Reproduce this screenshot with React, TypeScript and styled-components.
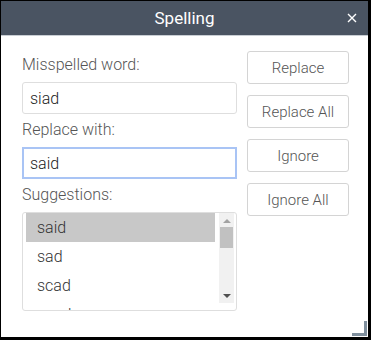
import React, { useState } from "react";
import styled, { createGlobalStyle } from "styled-components";

const GlobalStyle = createGlobalStyle`
  html, body {
    margin: 0;
    padding: 0;
    background: #fff;
  }
  body {
    font-family: Roboto, "Liberation Sans", Arial, sans-serif;
  }
`;

const Dialog = styled.div`
  position: relative;
  box-sizing: border-box;
  width: 371px;
  height: 340px;
  border-style: solid;
  border-color: #000;
  border-width: 1px 3px 3px 1px;
  background: #fff;
  display: flex;
  flex-direction: column;
`;

const TitleBar = styled.div`
  position: relative;
  height: 34px;
  flex-shrink: 0;
  background: #4a5462;
  border-bottom: 1px solid #c9ced4;
  display: flex;
  align-items: center;
  justify-content: center;
`;

const Title = styled.div`
  color: #fff;
  font-size: 17px;
  line-height: 20px;
  margin-top: -1px;
`;

const CloseButton = styled.button`
  position: absolute;
  right: 9px;
  top: 10px;
  width: 14px;
  height: 14px;
  padding: 0;
  border: 0;
  background: none;
  cursor: pointer;
  display: flex;
  align-items: center;
  justify-content: center;
`;

const Body = styled.div`
  display: flex;
  gap: 10px;
  padding: 14px 0 0 21px;
`;

const LeftColumn = styled.div`
  width: 215px;
  display: flex;
  flex-direction: column;
`;

const Label = styled.label<{ $first?: boolean }>`
  display: block;
  color: #555;
  font-size: 16px;
  font-weight: 300;
  line-height: 20px;
  margin: ${(p) => (p.$first ? "5px 0 7px" : "6px 0 7px")};
`;

const TextInput = styled.input<{ $focused?: boolean }>`
  box-sizing: border-box;
  width: 215px;
  height: 32px;
  margin: 0;
  font-family: inherit;
  font-size: 16px;
  font-weight: 300;
  color: #222;
  background: #fff;
  outline: none;
  border: ${(p) => (p.$focused ? "2px solid #a9c4f5" : "1px solid #dedede")};
  border-radius: ${(p) => (p.$focused ? "0" : "3px")};
  padding: 0 0 0 ${(p) => (p.$focused ? "6px" : "7px")};
`;

const ListBox = styled.div`
  box-sizing: border-box;
  width: 215px;
  height: 99px;
  border: 1px solid #dedede;
  border-radius: 3px;
  display: flex;
  padding: 0 2px 0 3px;
  overflow: hidden;
`;

const Items = styled.ul`
  list-style: none;
  margin: 0;
  padding: 0;
  width: 190px;
  overflow: hidden;
`;

const Item = styled.li<{ $selected?: boolean }>`
  height: 29px;
  line-height: 29px;
  padding-left: 11px;
  font-size: 16px;
  font-weight: 300;
  color: #333;
  background: ${(p) => (p.$selected ? "#c8c8c8" : "transparent")};
  cursor: default;
`;

const ScrollBar = styled.div`
  margin-left: 4px;
  width: 15px;
  height: 90px;
  background: #f1f1f1;
  display: flex;
  flex-direction: column;
  align-items: center;
`;

const Arrow = styled.div<{ $down?: boolean }>`
  width: 0;
  height: 0;
  margin: ${(p) => (p.$down ? "auto 0 5px" : "6px 0 0")};
  border-left: 4px solid transparent;
  border-right: 4px solid transparent;
  ${(p) =>
    p.$down ? "border-top: 4px solid #505050;" : "border-bottom: 4px solid #a3a3a3;"}
`;

const Thumb = styled.div`
  width: 13px;
  height: 21px;
  margin-top: 4px;
  background: #c1c1c1;
`;

const ButtonColumn = styled.div`
  display: flex;
  flex-direction: column;
  gap: 11px;
  margin-top: 1px;
`;

const ActionButton = styled.button`
  box-sizing: border-box;
  width: 102px;
  height: 33px;
  padding: 0;
  border: 1px solid #d4d4d4;
  border-radius: 3px;
  background: #fff;
  color: #555;
  font-family: inherit;
  font-size: 15px;
  font-weight: 300;
  cursor: pointer;
`;

const ResizeGrip = styled.div`
  position: absolute;
  right: 1px;
  bottom: 1px;
  width: 15px;
  height: 15px;
  border-right: 3px solid #7f8f9d;
  border-bottom: 3px solid #7f8f9d;
  box-sizing: border-box;
`;

const suggestions = ["said", "sad", "scad", "sand"];
const actions = ["Replace", "Replace All", "Ignore", "Ignore All"];

export default function App() {
  const [replaceWith, setReplaceWith] = useState("said");
  const [selected, setSelected] = useState(0);

  return (
    <>
      <GlobalStyle />
      <Dialog>
        <TitleBar>
          <Title>Spelling</Title>
          <CloseButton aria-label="Close">
            <svg width="10" height="10" viewBox="0 0 10 10">
              <path d="M1 1L9 9M9 1L1 9" stroke="#fff" strokeWidth="1.4" />
            </svg>
          </CloseButton>
        </TitleBar>
        <Body>
          <LeftColumn>
            <Label $first>Misspelled word:</Label>
            <TextInput value="siad" readOnly />
            <Label>Replace with:</Label>
            <TextInput
              $focused
              value={replaceWith}
              onChange={(e) => setReplaceWith(e.target.value)}
            />
            <Label>Suggestions:</Label>
            <ListBox>
              <Items>
                {suggestions.map((s, i) => (
                  <Item
                    key={s}
                    $selected={i === selected}
                    onClick={() => {
                      setSelected(i);
                      setReplaceWith(s);
                    }}
                  >
                    {s}
                  </Item>
                ))}
              </Items>
              <ScrollBar>
                <Arrow />
                <Thumb />
                <Arrow $down />
              </ScrollBar>
            </ListBox>
          </LeftColumn>
          <ButtonColumn>
            {actions.map((a) => (
              <ActionButton key={a}>{a}</ActionButton>
            ))}
          </ButtonColumn>
        </Body>
        <ResizeGrip />
      </Dialog>
    </>
  );
}
